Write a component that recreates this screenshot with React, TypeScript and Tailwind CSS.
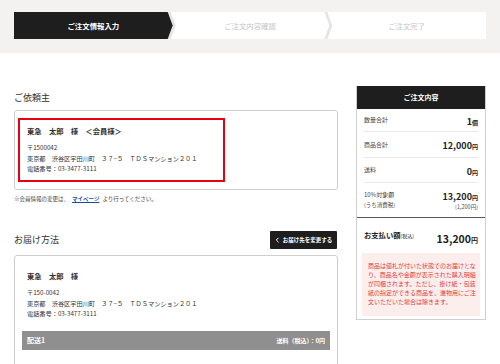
import React from 'react'

const jp = { fontFamily: '"Noto Sans CJK JP", "Noto Sans", sans-serif' }

function Steps() {
  // three chevron steps sitting on a light band; the gaps show as thin separators
  return (
    <div className="bg-[#f3f2f0] h-[53px] px-[14px] pt-[12px]">
      <div className="flex h-[27px] bg-[#e6e5e3]">
        <div className="flex-1 flex items-center justify-center bg-[#1e1e1e] text-white font-bold text-[7.4px] [clip-path:polygon(0_0,calc(100%-5px)_0,100%_50%,calc(100%-5px)_100%,0_100%)]">
          ご注文情報入力
        </div>
        <div className="flex-1 -ml-[2px] flex items-center justify-center bg-white text-[#c6c6c6] text-[7.4px] [clip-path:polygon(0_0,calc(100%-5px)_0,100%_50%,calc(100%-5px)_100%,0_100%,5px_50%)]">
          ご注文内容確認
        </div>
        <div className="flex-1 -ml-[2px] flex items-center justify-center bg-white text-[#c6c6c6] text-[7.4px] [clip-path:polygon(0_0,100%_0,100%_100%,0_100%,5px_50%)]">
          ご注文完了
        </div>
      </div>
    </div>
  )
}

function Address({ name }: { name: string }) {
  return (
    <div className="text-[#333]">
      <div className="h-[10px] leading-[10px] text-[7.3px] font-bold whitespace-nowrap">{name}</div>
      <div className="mt-[7px] text-[6.2px] leading-[10.5px] whitespace-nowrap">
        <div>{name.includes('会員') ? '〒1500042' : '〒150-0042'}</div>
        <div>東京都　渋谷区宇田川町　３７−５　ＴＤＳマンション２０１</div>
        <div>電話番号：03-3477-3111</div>
      </div>
    </div>
  )
}

function SummaryRow({
  label,
  value,
  unit,
  h,
}: {
  label: string
  value: string
  unit: string
  h: string
}) {
  return (
    <div className={`flex items-center justify-between border-b border-[#e8e8e8] ${h}`}>
      <div className="text-[6px] leading-[10px] text-[#444]">{label}</div>
      <div className="leading-[11px] text-[#222]">
        <span className="font-bold text-[9px]">{value}</span>
        <span className="font-bold text-[6px]">{unit}</span>
      </div>
    </div>
  )
}

export default function App() {
  return (
    <div className="w-[500px] h-[364px] overflow-hidden bg-white" style={jp}>
      <Steps />

      <div className="flex gap-[18px] px-[14px]">
        {/* Left column */}
        <div className="w-[324px]">
          <div className="pt-[39px] h-[51px] text-[9px] leading-[12px] text-[#333]">ご依頼主</div>
          <div className="mt-[6px] h-[80px] border border-[#cfcfcf] rounded-[3px] pl-[3px] pt-[7px]">
            <div className="w-[207px] h-[64px] border-2 border-[#e60012] pl-[7px] pt-[6px]">
              <Address name="東急　太郎　様　＜会員様＞" />
            </div>
          </div>
          <div className="mt-[5px] h-[8px] leading-[8px] text-[5.5px] text-[#444] whitespace-nowrap">
            ※会員情報の変更は、<span className="mx-[3px] text-[#1a4c9c] font-bold underline">マイページ</span>より行ってください。
          </div>

          <div className="mt-[28px] h-[18px] flex items-center justify-between">
            <div className="text-[9px] leading-[12px] text-[#333]">お届け方法</div>
            <div className="h-[18px] w-[67px] mr-[1px] bg-[#1e1e1e] rounded-[1px] flex items-center justify-center gap-[3px] text-white text-[5.5px] font-bold">
              <svg width="5" height="6" viewBox="0 0 5 6" fill="none">
                <path d="M3.5 0.8L1.3 3l2.2 2.2" stroke="white" strokeWidth="1" />
              </svg>
              お届け先を変更する
            </div>
          </div>

          <div className="mt-[6px] h-[120px] border border-[#cfcfcf] rounded-[3px] pt-[15px]">
            <div className="pl-[12px]">
              <Address name="東急　太郎　様" />
            </div>
            <div className="mt-[11px] mx-[7px] h-[19px] bg-[#8f8f8f] flex items-center justify-between px-[5px] text-white font-bold">
              <span className="text-[7px]">配送1</span>
              <span className="text-[6px]">送料（税込）：0円</span>
            </div>
          </div>
        </div>

        {/* Right column: order summary */}
        <div className="w-[130px] mt-[33px] h-[234px] border border-[#cfcfcf] border-t-0">
          <div className="h-[23px] bg-[#1e1e1e] flex items-center justify-center text-white text-[7px] font-bold">
            ご注文内容
          </div>
          <div className="px-[7px]">
            <SummaryRow label="数量合計" value="1" unit="個" h="h-[23px]" />
            <SummaryRow label="商品合計" value="12,000" unit="円" h="h-[26px]" />
            <SummaryRow label="送料" value="0" unit="円" h="h-[25px]" />
          </div>
          <div className="border-b border-[#555]">
            <div className="px-[7px]">
              <div className="h-[34px] flex items-center justify-between">
                <div className="text-[6px] leading-[10px] text-[#444]">
                  <div>10%対象額</div>
                  <div className="text-[5.5px]">(うち消費税)</div>
                </div>
                <div className="text-right text-[#222]">
                  <div className="leading-[11px]">
                    <span className="font-bold text-[9px]">13,200</span>
                    <span className="font-bold text-[6px]">円</span>
                  </div>
                  <div className="text-[5.5px] leading-[9px] text-[#555]">(1,200円)</div>
                </div>
              </div>
            </div>
          </div>
          <div className="h-[35px] px-[7px] flex items-center justify-between text-[#222]">
            <div className="font-bold text-[7.3px]">
              お支払い額<span className="text-[5px] font-normal">(税込)</span>
            </div>
            <div className="font-bold">
              <span className="text-[10.5px]">13,200</span>
              <span className="text-[7px]">円</span>
            </div>
          </div>
          <div className="mx-[5px] h-[63px] bg-[#fdeeee] pl-[6px] pt-[8px] text-[6px] leading-[9px] text-[#e03c3c] whitespace-nowrap">
            商品は値札が付いた状態でのお届けとな<br />
            り、商品名や金額が表示された購入明細<br />
            が同梱されます。ただし、掛け紙・包装<br />
            紙の指定ができる商品を、進物用にご注<br />
            文いただいた場合は除きます。
          </div>
        </div>
      </div>
    </div>
  )
}
